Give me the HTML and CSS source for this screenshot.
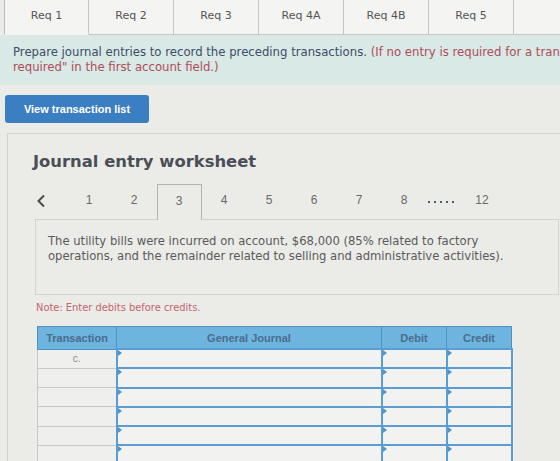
FILE: index.html
```html
<!DOCTYPE html>
<html lang="en">
<head>
<meta charset="utf-8">
<title>Journal entry worksheet</title>
<link rel="stylesheet" href="styles.css">
</head>
<body>
  <nav class="req-tabs">
    <div class="req-tab is-active">Req 1</div>
    <div class="req-tab">Req 2</div>
    <div class="req-tab">Req 3</div>
    <div class="req-tab">Req 4A</div>
    <div class="req-tab">Req 4B</div>
    <div class="req-tab">Req 5</div>
    <div class="req-tab req-tab-fill"></div>
  </nav>

  <section class="instructions">
    <p class="instructions-text">Prepare journal entries to record the preceding transactions. <span class="hint">(If no entry is required for a transaction/event, select "No journal entry<br>required" in the first account field.)</span></p>
  </section>

  <div class="actions">
    <button class="btn-primary" type="button">View transaction list</button>
  </div>

  <section class="worksheet">
    <h2 class="worksheet-title">Journal entry worksheet</h2>

    <div class="pager">
      <span class="pager-prev">
        <svg width="10" height="14" viewBox="0 0 10 14" aria-hidden="true"><polyline points="8,1.5 2.5,7 8,12.5" fill="none" stroke="#4a4a4a" stroke-width="2"/></svg>
      </span>
      <span class="pager-item">1</span>
      <span class="pager-item">2</span>
      <span class="pager-item is-current">3</span>
      <span class="pager-item">4</span>
      <span class="pager-item">5</span>
      <span class="pager-item">6</span>
      <span class="pager-item">7</span>
      <span class="pager-item">8</span>
      <span class="pager-gap"><i></i><i></i><i></i><i></i><i></i></span>
      <span class="pager-item">12</span>
    </div>

    <div class="event">
      <p>The utility bills were incurred on account, $68,000 (85% related to factory operations, and the remainder related to selling and administrative activities).</p>
    </div>

    <p class="note">Note: Enter debits before credits.</p>

    <table class="journal">
      <thead>
        <tr>
          <th class="col-txn">Transaction</th>
          <th class="col-acct">General Journal</th>
          <th class="col-amt">Debit</th>
          <th class="col-amt">Credit</th>
        </tr>
      </thead>
      <tbody>
        <tr><td class="txn">c.</td><td class="field"></td><td class="field"></td><td class="field"></td></tr>
        <tr><td class="txn"></td><td class="field"></td><td class="field"></td><td class="field"></td></tr>
        <tr><td class="txn"></td><td class="field"></td><td class="field"></td><td class="field"></td></tr>
        <tr><td class="txn"></td><td class="field"></td><td class="field"></td><td class="field"></td></tr>
        <tr><td class="txn"></td><td class="field"></td><td class="field"></td><td class="field"></td></tr>
        <tr><td class="txn"></td><td class="field"></td><td class="field"></td><td class="field"></td></tr>
        <tr><td class="txn"></td><td class="field"></td><td class="field"></td><td class="field"></td></tr>
      </tbody>
    </table>
  </section>
</body>
</html>
```

FILE: styles.css
```css
html, body {
  margin: 0;
  padding: 0;
}

body {
  width: 560px;
  height: 461px;
  overflow: hidden;
  background: #ebebe7;
  font-family: "DejaVu Sans", Verdana, sans-serif;
  color: #555;
}

/* requirement tabs */
.req-tabs {
  display: flex;
  height: 35px;
  padding-left: 4px;
}

.req-tab {
  flex: 0 0 85px;
  display: flex;
  align-items: center;
  justify-content: center;
  padding-bottom: 4px;
  box-sizing: border-box;
  background: #f4f4f2;
  border-right: 1px solid #c6c6c3;
  border-bottom: 1px solid #c6c6c3;
  font-size: 11px;
  color: #555;
}

.req-tab.is-active {
  border-left: 1px solid #b9b9b6;
  border-bottom-color: transparent;
}

.req-tab-fill {
  flex: 1 0 60px;
  border-right: none;
}

/* instructions band */
.instructions {
  width: 900px;
  background: #d8e9e6;
  padding: 10px 13px 10px;
  box-sizing: border-box;
}

.instructions-text {
  margin: 0;
  font-size: 11.7px;
  line-height: 15px;
  color: #3e4c66;
  white-space: nowrap;
}

.instructions-text .hint {
  color: #b04c5a;
}

/* view transaction list */
.actions {
  padding: 10px 0 0 5px;
}

.btn-primary {
  display: block;
  width: 144px;
  height: 28px;
  border: none;
  border-radius: 3px;
  background: #3b7ec1;
  color: #fff;
  font-family: "Liberation Sans", Arial, sans-serif;
  font-weight: bold;
  font-size: 11px;
  padding: 0;
}

/* worksheet */
.worksheet {
  width: 586px;
  margin: 10px 0 0 7px;
  border: 1px solid #d2d2cf;
  border-right: none;
  padding: 17px 0 0 27px;
  box-sizing: border-box;
  height: 400px;
}

.worksheet-title {
  margin: 0 0 11px -2px;
  font-size: 16.4px;
  line-height: 22px;
  font-weight: bold;
  color: #4a4e57;
}

.pager {
  display: flex;
  align-items: center;
  height: 35px;
  font-family: "Liberation Sans", Arial, sans-serif;
  font-size: 12px;
  color: #6a6a6a;
}

.pager-prev {
  flex: 0 0 31.5px;
  display: flex;
  align-items: center;
  padding-left: 1px;
  box-sizing: border-box;
  margin-top: -2px;
}

.pager-item {
  flex: 0 0 45px;
  height: 35px;
  display: flex;
  align-items: center;
  justify-content: center;
  box-sizing: border-box;
  padding-bottom: 9px;
  padding-top: 6px;
}

.pager-item.is-current {
  border: 1px solid #b3b3b0;
  border-bottom: none;
  background: #ebebe7;
  position: relative;
  z-index: 1;
  margin-bottom: -1px;
  height: 36px;
  padding-bottom: 10px;
}

.pager-gap {
  flex: 0 0 32px;
  display: flex;
  gap: 4px;
  padding-left: 1px;
  margin-top: 1px;
}

.pager-gap i {
  width: 2px;
  height: 2px;
  background: #4f5a6a;
}

/* event description */
.event {
  width: 524px;
  height: 76px;
  box-sizing: border-box;
  border: 1px solid #d2d2cf;
  padding: 14px 45px 0 12px;
}

.event p {
  margin: 0;
  font-size: 11.6px;
  line-height: 15px;
  color: #5a5a5a;
}

.note {
  margin: 6px 0 0 1px;
  font-size: 9.9px;
  line-height: 14px;
  color: #c4646f;
}

/* journal table */
.journal {
  margin: 11px 0 0 2px;
  border-collapse: collapse;
  table-layout: fixed;
  width: 471px;
  font-family: "Liberation Sans", Arial, sans-serif;
}

.journal th {
  height: 21px;
  padding: 0;
  background: #6db4df;
  border: 1px solid #4f91c4;
  font-size: 11px;
  font-weight: bold;
  color: #4b6c8e;
}

.journal .col-txn { width: 78px; }
.journal .col-acct { width: 264px; }
.journal .col-amt { width: 64px; }

.journal td {
  height: 17.3px;
  padding: 0;
}

.journal td.txn {
  border: 1px solid #c8c8c6;
  background: #efefed;
  text-align: center;
  font-size: 10px;
  color: #8a8a8a;
}

.journal td.field {
  position: relative;
  border: 2px solid #5b9dd2;
  background: #f2f2f0;
}

/* dropdown marker in the corner of each entry field */
.journal td.field::before {
  content: "";
  position: absolute;
  top: 0;
  left: 0;
  border-top: 3px solid transparent;
  border-bottom: 3px solid transparent;
  border-left: 4px solid #4d95cf;
}
```
